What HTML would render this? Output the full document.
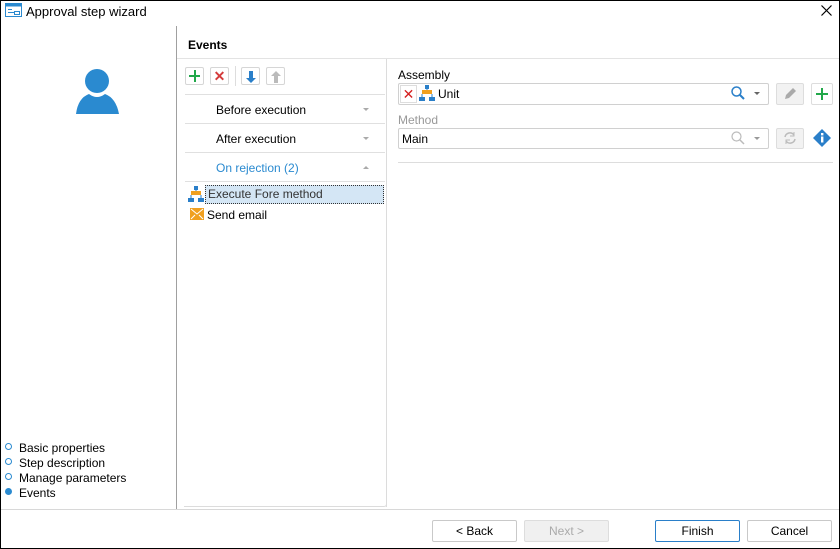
<!DOCTYPE html>
<html><head><style>
*{box-sizing:border-box;margin:0;padding:0}
body{width:840px;height:549px;position:relative;background:#fff;font-family:"Liberation Sans",sans-serif;font-size:12px;color:#000;overflow:hidden}
.a{position:absolute}
.btn{position:absolute;top:520px;height:22px;border:1px solid #c9c9c9;border-radius:2px;background:#fff;text-align:center;line-height:20px;font-size:12px}
.tb{position:absolute;top:67px;width:19px;height:18px;border:1px solid #d6d6d6;border-radius:2px;background:#fff}
.row{position:absolute;left:185px;width:200px;height:29px;border-bottom:1px solid #e0e0e0;line-height:31px;padding-left:31px}
.tri{position:absolute;right:16px;top:13px;width:0;height:0;border-left:3px solid transparent;border-right:3px solid transparent;border-top:3px solid #aaa}
.dot{position:absolute;left:5px;width:7px;height:7px;border-radius:50%;border:1px solid #2a8ad0}
.step{position:absolute;left:19px}
</style></head><body>
<div class="a" style="left:0;top:0;width:840px;height:549px;border:1px solid #000"></div>
<svg class="a" style="left:5px;top:3px" width="17" height="15"><rect x="0.5" y="0.5" width="16" height="13" fill="#fff" stroke="#2a8ad0"/><rect x="0.5" y="0.5" width="16" height="3" fill="#2a8ad0"/><line x1="3" y1="6.5" x2="7" y2="6.5" stroke="#2a8ad0"/><line x1="3" y1="9.5" x2="9" y2="9.5" stroke="#2a8ad0"/><rect x="9.5" y="8.5" width="5" height="3" fill="none" stroke="#2a8ad0"/></svg>
<div class="a" style="left:26px;top:4px;font-size:13px">Approval step wizard</div>
<svg class="a" style="left:821px;top:5px" width="11" height="11"><path d="M0.5 0.5l10 10M10.5 0.5l-10 10" stroke="#000" stroke-width="1.2"/></svg>
<div class="a" style="left:176px;top:26px;width:1px;height:484px;background:#a0a0a0"></div>
<svg class="a" style="left:75px;top:67px" width="46" height="48"><circle cx="22" cy="14" r="12" fill="#2a8ad0"/><path d="M1 47 Q3 31 14 27 Q22 33 30 27 Q41 31 44 47 Z" fill="#2a8ad0"/></svg>
<div class="dot" style="top:443px"></div><div class="step" style="top:441px">Basic properties</div>
<div class="dot" style="top:458px"></div><div class="step" style="top:456px">Step description</div>
<div class="dot" style="top:473px"></div><div class="step" style="top:471px">Manage parameters</div>
<div class="dot" style="top:488px;background:#2a8ad0"></div><div class="step" style="top:486px">Events</div>
<div class="a" style="left:188px;top:38px;font-weight:bold;font-size:12px">Events</div>
<div class="a" style="left:177px;top:58px;width:662px;height:1px;background:#e3e3e3"></div>
<div class="a" style="left:184px;top:59px;width:203px;height:448px;border:1px solid #dcdcdc;border-top:none;border-left:none;border-radius:0 0 3px 0"></div>
<div class="a" style="left:386px;top:59px;width:1px;height:448px;background:#dcdcdc"></div>
<div class="tb" style="left:185px"><div class="a" style="left:3px;top:7px;width:11px;height:2px;background:#22a84a"></div><div class="a" style="left:8px;top:2px;width:2px;height:12px;background:#22a84a"></div></div>
<div class="tb" style="left:210px;color:#d43c3c;font-size:14px;line-height:16px;text-align:center;font-weight:bold">✕</div>
<div class="a" style="left:235px;top:66px;width:1px;height:20px;background:#ddd"></div>
<svg class="tb" style="left:241px" width="19" height="18"><path d="M7 3h4v7h3l-5 5-5-5h3z" fill="#2a7fc9"/></svg>
<svg class="tb" style="left:266px" width="19" height="18"><path d="M7 15h4V8h3L9 3 4 8h3z" fill="#bbb"/></svg>
<div class="a" style="left:185px;top:94px;width:200px;height:1px;background:#e0e0e0"></div>
<div class="row" style="top:95px">Before execution<div class="tri"></div></div>
<div class="row" style="top:124px">After execution<div class="tri"></div></div>
<div class="row" style="top:153px;color:#2a8ad0">On rejection (2)<div class="tri" style="border-top:none;border-bottom:3px solid #aaa"></div></div>
<svg class="a" style="left:188px;top:186px" width="16" height="16"><rect x="6" y="0" width="4" height="4" fill="#2a7fc9"/><rect x="3" y="5" width="10" height="4" fill="#f0a020"/><path d="M3 9v3M13 9v3M8 4v1" stroke="#2a7fc9"/><rect x="0" y="12" width="6" height="4" fill="#2a7fc9"/><rect x="10" y="12" width="6" height="4" fill="#2a7fc9"/></svg>
<div class="a" style="left:205px;top:185px;width:179px;height:19px;background:#d4e6f5;border:1px dotted #333;line-height:17px;padding-left:2px;color:#333">Execute Fore method</div>
<svg class="a" style="left:190px;top:208px" width="14" height="12"><rect width="14" height="12" fill="#f0a020"/><path d="M1 1l6 5 6-5M1 11l4-4M13 11l-4-4" stroke="#fff" fill="none"/></svg>
<div class="a" style="left:207px;top:208px">Send email</div>
<div class="a" style="left:398px;top:68px">Assembly</div>
<div class="a" style="left:398px;top:83px;width:371px;height:22px;border:1px solid #d0d0d0;border-radius:2px"></div>
<div class="a" style="left:400px;top:85px;width:17px;height:18px;border:1px solid #ddd;color:#d42020;font-size:14px;line-height:16px;text-align:center">✕</div>
<svg class="a" style="left:419px;top:85px" width="16" height="17"><rect x="6" y="0" width="4" height="4" fill="#2a7fc9"/><rect x="3" y="5" width="10" height="4" fill="#f0a020"/><path d="M3 9v3M13 9v3M8 4v1" stroke="#2a7fc9"/><rect x="0" y="12" width="6" height="4" fill="#2a7fc9"/><rect x="10" y="12" width="6" height="4" fill="#2a7fc9"/></svg>
<div class="a" style="left:438px;top:87px">Unit</div>
<svg class="a" style="left:731px;top:86px" width="14" height="14"><circle cx="5.5" cy="5.5" r="4.5" fill="none" stroke="#2a7fc9" stroke-width="1.5"/><path d="M9 9l4 4" stroke="#2a7fc9" stroke-width="2"/></svg>
<div class="a" style="left:754px;top:92px;border-left:3px solid transparent;border-right:3px solid transparent;border-top:3px solid #666"></div>
<div class="a" style="left:776px;top:83px;width:28px;height:22px;border:1px solid #ddd;border-radius:2px;background:#f2f2f2"></div>
<svg class="a" style="left:782px;top:86px" width="16" height="16"><path d="M3 13l1-4 7-7 3 3-7 7z" fill="#aaa"/></svg>
<div class="a" style="left:811px;top:83px;width:22px;height:22px;border:1px solid #ddd;border-radius:2px"><div class="a" style="left:4px;top:9px;width:12px;height:2px;background:#22a84a"></div><div class="a" style="left:9px;top:4px;width:2px;height:12px;background:#22a84a"></div></div>
<div class="a" style="left:398px;top:113px;color:#999">Method</div>
<div class="a" style="left:398px;top:128px;width:371px;height:21px;border:1px solid #d0d0d0;border-radius:2px"></div>
<div class="a" style="left:402px;top:132px">Main</div>
<svg class="a" style="left:731px;top:131px" width="14" height="14"><circle cx="5.5" cy="5.5" r="4.5" fill="none" stroke="#bbb" stroke-width="1.2"/><path d="M9 9l4 4" stroke="#bbb" stroke-width="1.5"/></svg>
<div class="a" style="left:754px;top:137px;border-left:3px solid transparent;border-right:3px solid transparent;border-top:3px solid #999"></div>
<div class="a" style="left:776px;top:128px;width:28px;height:21px;border:1px solid #ddd;border-radius:2px;background:#f2f2f2"></div>
<svg class="a" style="left:782px;top:130px" width="16" height="16"><path d="M3 7a5 5 0 0 1 9-2M13 9a5 5 0 0 1-9 2" fill="none" stroke="#bbb" stroke-width="1.5"/><path d="M12 2v4h-4M4 14v-4h4" fill="none" stroke="#bbb"/></svg>
<svg class="a" style="left:812px;top:128px" width="20" height="20"><path d="M10 1l9 9-9 9-9-9z" fill="#2a7fc9"/><rect x="9" y="5" width="2.4" height="2.4" fill="#fff"/><rect x="9" y="8.5" width="2.4" height="6" fill="#fff"/></svg>
<div class="a" style="left:398px;top:162px;width:435px;height:1px;background:#ddd"></div>
<div class="a" style="left:1px;top:509px;width:838px;height:1px;background:#d8d8d8"></div>
<div class="btn" style="left:432px;width:85px">&lt; Back</div>
<div class="btn" style="left:524px;width:85px;background:#f0f0f0;border-color:#ddd;color:#aaa">Next &gt;</div>
<div class="btn" style="left:655px;width:85px;border-color:#2a7fc9">Finish</div>
<div class="btn" style="left:747px;width:85px">Cancel</div>
</body></html>
